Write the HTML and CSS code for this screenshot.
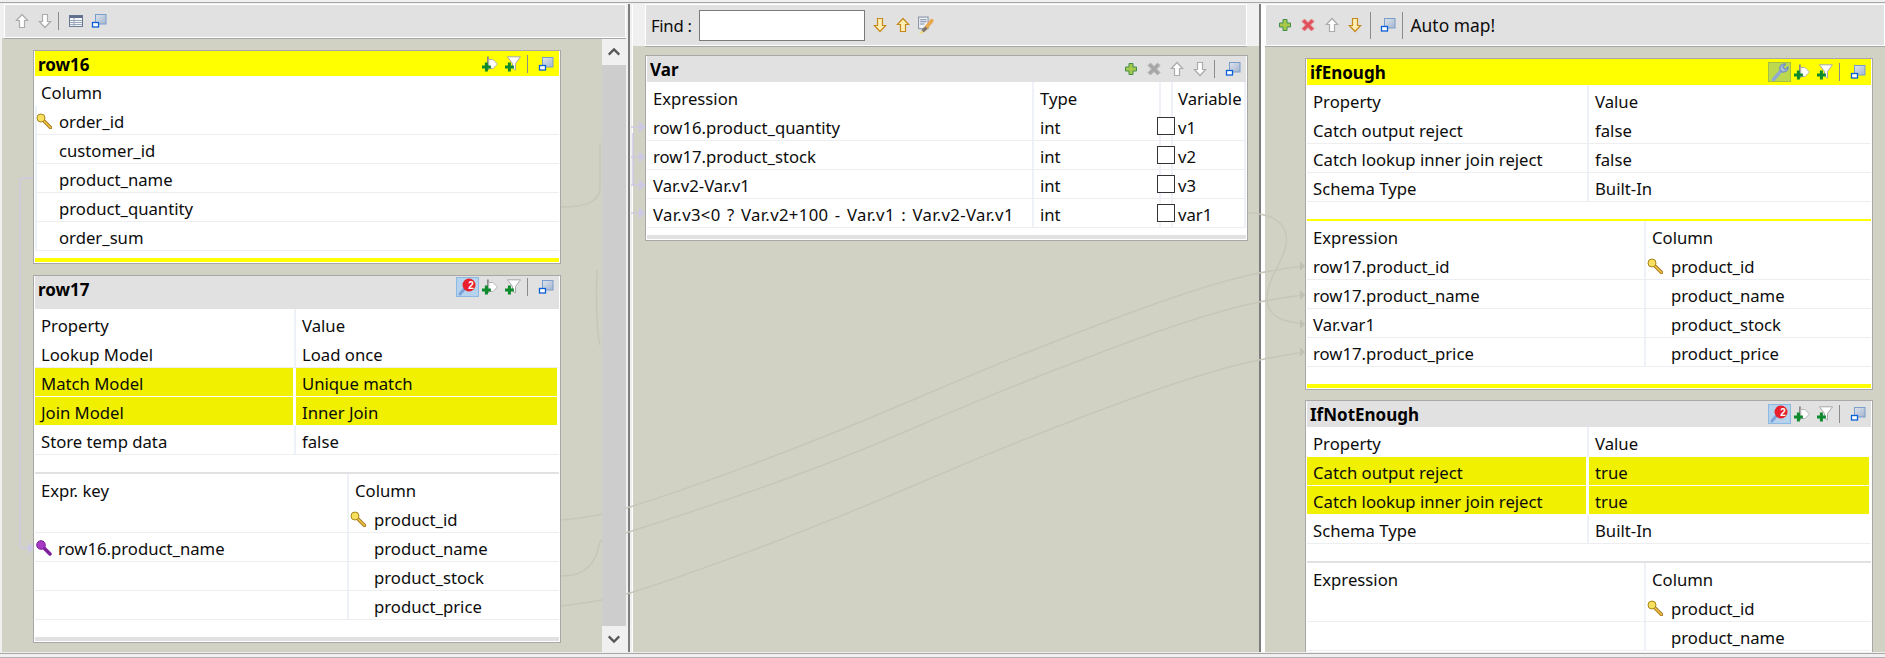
FILE: index.html
```html
<!DOCTYPE html>
<html lang="en">
<head>
<meta charset="utf-8">
<title>tMap</title>
<link rel="stylesheet" href="styles.css">
</head>
<body>
<svg class="defs" width="0" height="0" aria-hidden="true">
  <defs>
    <linearGradient id="winfill" x1="0" y1="0" x2="1" y2="1"><stop offset="0" stop-color="#dfe4ec"/><stop offset="1" stop-color="#a3b5cf"/></linearGradient>
  </defs>
  <symbol id="up" viewBox="0 0 16 16"><path d="M8 1.500 13.600 7.500H10.500V14.500H5.500V7.500H2.400Z"/></symbol>
  <symbol id="down" viewBox="0 0 16 16"><path d="M8 14.500 13.600 8.500H10.500V1.500H5.500V8.500H2.400Z"/></symbol>
  <symbol id="win" viewBox="0 0 16 16">
    <rect x="4.500" y="1.500" width="10.500" height="9.500" fill="url(#winfill)" stroke="#7b9dcb"/>
    <rect x="1.500" y="9.500" width="6" height="4.500" fill="#fff" stroke="#0b5fd6" stroke-width="1.300"/>
  </symbol>
  <symbol id="table" viewBox="0 0 16 16">
    <rect x="1.500" y="2.500" width="13" height="11" fill="#f4f6fa" stroke="#6c7b94"/>
    <rect x="1.500" y="2.500" width="13" height="2.500" fill="#5f6f8c"/>
    <path d="M2 7.500H14M2 9.500H14M2 11.500H14M6 5V13.500" stroke="#9aa6ba" fill="none"/>
  </symbol>
  <symbol id="plus" viewBox="0 0 16 16"><path d="M6 2.500H10V6H13.500V10H10V13.500H6V10H2.500V6H6Z" fill="#a8c84c" stroke="#3f8f4a"/></symbol>
  <symbol id="cross" viewBox="0 0 16 16"><path d="M4.500 2 8 5.500 11.500 2 14 4.500 10.500 8 14 11.500 11.500 14 8 10.500 4.500 14 2 11.500 5.500 8 2 4.500Z"/></symbol>
  <symbol id="addrow" viewBox="0 0 16 16">
    <path d="M5 .5H6.800V14H5Z" fill="#8a8a8a"/>
    <path d="M6.800 3.500H11L15.500 8 11 12.500H6.800Z" fill="#fff" stroke="#b4b4b4"/>
    <path d="M2.900 6.500H5.900V9.500H8.900V12.500H5.900V15.500H2.900V12.500H-.1V9.500H2.900Z" fill="#0c8a2c"/>
  </symbol>
  <symbol id="filter" viewBox="0 0 16 16">
    <path d="M2.500 .8H15.500L10.500 7.500V14L7.500 12V7.500Z" fill="#fff" stroke="#a8a8a8"/>
    <path d="M2.900 6.500H5.900V9.500H8.900V12.500H5.900V15.500H2.900V12.500H-.1V9.500H2.900Z" fill="#0c8a2c"/>
  </symbol>
  <symbol id="lens" viewBox="0 0 21 18">
    <path d="M3 16 9 9" stroke="#7da3d8" stroke-width="3" stroke-linecap="round"/>
    <circle cx="12" cy="7" r="6.500" fill="#e8202c"/>
  </symbol>
  <symbol id="wrench" viewBox="0 0 21 18">
    <path d="M4.500 16.500 12 8" stroke="#8fa9d3" stroke-width="3.500" stroke-linecap="round"/>
    <path d="M11 7C10 3 13 .5 16.500 1L14 4 16 6.500 19 4C19.500 8 15.500 10 12.500 8.500Z" fill="#a9bedd" stroke="#6e8fc2" stroke-width="1.200"/>
  </symbol>
  <symbol id="key" viewBox="0 0 16 16">
    <path d="M7.500 7.500 14.500 14.500" stroke="#a9791c" stroke-width="3.500" stroke-linecap="round"/>
    <path d="M7.500 7.500 14.500 14.500" stroke="#f0c848" stroke-width="1.500" stroke-linecap="round"/>
    <circle cx="5" cy="5" r="4" fill="#f6e05e" stroke="#a9851c"/>
  </symbol>
  <symbol id="keyp" viewBox="0 0 16 16">
    <path d="M7.500 7.500 14 14" stroke="#7e1f9c" stroke-width="3.500" stroke-linecap="round"/>
    <circle cx="5" cy="5" r="4.300" fill="#a638c4" stroke="#7e1f9c"/>
  </symbol>
  <symbol id="find" viewBox="0 0 18 18">
    <rect x="1.500" y="1" width="9" height="11" fill="#eef1f6" stroke="#8a94a4"/>
    <path d="M3 3.500H9M3 5.500H9M3 7.500H7" stroke="#7d8ba3" fill="none"/>
    <path d="M7 13 14 4.500" stroke="#e8a850" stroke-width="3.500" stroke-linecap="round"/>
    <path d="M5 14.500 9 11" stroke="#777" stroke-width="3"/>
    <path d="M1.500 17 5 13.500 6 16Z" fill="#f0dc70"/>
  </symbol>
</svg>

<div class="frame">
  <div class="topstrip"></div>
  <div class="main">

    <section class="pane pane-left">
      <div class="toolbar toolbar-short">
        <span class="tool gray"><svg><use href="#up"/></svg></span>
        <span class="tool gray"><svg><use href="#down"/></svg></span>
        <span class="sep"></span>
        <span class="tool"><svg><use href="#table"/></svg></span>
        <span class="tool"><svg><use href="#win"/></svg></span>
      </div>
      <div class="canvas canvas-left">
        <div class="stack">
          <article class="panel active">
            <header class="head">
              <h2>row16</h2>
              <div class="tools">
                <span class="tool"><svg><use href="#addrow"/></svg></span>
                <span class="tool"><svg><use href="#filter"/></svg></span>
                <span class="sep sep-head"></span>
                <span class="tool"><svg><use href="#win"/></svg></span>
              </div>
            </header>
            <div class="hrow"><span class="cell">Column</span></div>
            <div class="row edge"><span class="cell icon"><svg class="k"><use href="#key"/></svg>order_id</span></div>
            <div class="row edge"><span class="cell icon">customer_id</span></div>
            <div class="row edge"><span class="cell icon">product_name</span></div>
            <div class="row edge"><span class="cell icon">product_quantity</span></div>
            <div class="row edge"><span class="cell icon">order_sum</span></div>
            <div class="blank b7"></div>
            <div class="bar yellow"></div>
          </article>

          <article class="panel">
            <header class="head head-tall">
              <h2>row17</h2>
              <div class="tools">
                <span class="tool on-blue"><svg><use href="#lens"/></svg><b class="num">2</b></span>
                <span class="tool"><svg><use href="#addrow"/></svg></span>
                <span class="tool"><svg><use href="#filter"/></svg></span>
                <span class="sep sep-head"></span>
                <span class="tool"><svg><use href="#win"/></svg></span>
              </div>
            </header>
            <div class="cols c261">
              <div class="hrow"><span class="cell">Property</span><span class="cell">Value</span></div>
              <div class="row"><span class="cell">Lookup Model</span><span class="cell">Load once</span></div>
              <div class="row hl"><span class="cell">Match Model</span><span class="cell">Unique match</span></div>
              <div class="row hl"><span class="cell">Join Model</span><span class="cell">Inner Join</span></div>
              <div class="row"><span class="cell">Store temp data</span><span class="cell">false</span></div>
            </div>
            <div class="blank b17"></div>
            <div class="bar thin gray-bar"></div>
            <div class="cols c314">
              <div class="hrow"><span class="cell">Expr. key</span><span class="cell">Column</span></div>
              <div class="row"><span class="cell"></span><span class="cell icon"><svg class="k"><use href="#key"/></svg>product_id</span></div>
              <div class="row"><span class="cell icon wide-key"><svg class="k"><use href="#keyp"/></svg>row16.product_name</span><span class="cell icon">product_name</span></div>
              <div class="row"><span class="cell"></span><span class="cell icon">product_stock</span></div>
              <div class="row"><span class="cell"></span><span class="cell icon">product_price</span></div>
            </div>
            <div class="blank b17"></div>
            <div class="bar gray-bar"></div>
          </article>
        </div>
        <div class="scrollbar">
          <span class="sb-btn"><svg viewBox="0 0 16 10"><path d="M2 8 8 2 14 8"/></svg></span>
          <span class="sb-thumb"></span>
          <span class="sb-btn"><svg viewBox="0 0 16 10"><path d="M2 2 8 8 14 2"/></svg></span>
        </div>
      </div>
    </section>

    <div class="sash sash-a"></div>

    <section class="pane pane-mid">
      <div class="toolbar toolbar-mid">
        <label class="find">Find :</label>
        <input class="find-input" type="text">
        <span class="tool orange"><svg><use href="#down"/></svg></span>
        <span class="tool orange"><svg><use href="#up"/></svg></span>
        <span class="tool find-ico"><svg><use href="#find"/></svg></span>
      </div>
      <div class="canvas canvas-mid">
        <article class="panel panel-var">
          <header class="head head-26">
            <h2>Var</h2>
            <div class="tools">
              <span class="tool"><svg><use href="#plus"/></svg></span>
              <span class="tool muted"><svg><use href="#cross"/></svg></span>
              <span class="tool gray"><svg><use href="#up"/></svg></span>
              <span class="tool gray"><svg><use href="#down"/></svg></span>
              <span class="sep sep-head"></span>
              <span class="tool"><svg><use href="#win"/></svg></span>
            </div>
          </header>
          <div class="cols cvar">
            <div class="hrow"><span class="cell">Expression</span><span class="cell">Type</span><span class="cell"></span><span class="cell">Variable</span></div>
            <div class="row"><span class="cell">row16.product_quantity</span><span class="cell">int</span><span class="cell check"><i class="box"></i></span><span class="cell">v1</span></div>
            <div class="row"><span class="cell">row17.product_stock</span><span class="cell">int</span><span class="cell check"><i class="box"></i></span><span class="cell">v2</span></div>
            <div class="row"><span class="cell">Var.v2-Var.v1</span><span class="cell">int</span><span class="cell check"><i class="box"></i></span><span class="cell">v3</span></div>
            <div class="row"><span class="cell wide">Var.v3&lt;0 ? Var.v2+100 - Var.v1 : Var.v2-Var.v1</span><span class="cell">int</span><span class="cell check"><i class="box"></i></span><span class="cell">var1</span></div>
          </div>
          <div class="blank b7"></div>
          <div class="bar gray-bar"></div>
        </article>
      </div>
    </section>

    <div class="sash sash-b"></div>

    <section class="pane pane-right">
      <div class="toolbar toolbar-right">
        <span class="tool"><svg><use href="#plus"/></svg></span>
        <span class="tool red"><svg><use href="#cross"/></svg></span>
        <span class="tool gray"><svg><use href="#up"/></svg></span>
        <span class="tool orange"><svg><use href="#down"/></svg></span>
        <span class="sep sep-tb"></span>
        <span class="tool"><svg><use href="#win"/></svg></span>
        <span class="sep sep-tb2"></span>
        <span class="automap">Auto map!</span>
      </div>
      <div class="canvas canvas-right">
        <article class="panel panel-out active">
          <header class="head head-26">
            <h2>ifEnough</h2>
            <div class="tools">
              <span class="tool on-green"><svg><use href="#wrench"/></svg></span>
              <span class="tool"><svg><use href="#addrow"/></svg></span>
              <span class="tool"><svg><use href="#filter"/></svg></span>
              <span class="sep sep-head"></span>
              <span class="tool"><svg><use href="#win"/></svg></span>
            </div>
          </header>
          <div class="cols c282">
            <div class="hrow"><span class="cell">Property</span><span class="cell">Value</span></div>
            <div class="row"><span class="cell">Catch output reject</span><span class="cell">false</span></div>
            <div class="row"><span class="cell">Catch lookup inner join reject</span><span class="cell">false</span></div>
            <div class="row"><span class="cell">Schema Type</span><span class="cell">Built-In</span></div>
          </div>
          <div class="blank b17"></div>
          <div class="bar thin yellow"></div>
          <div class="cols c339">
            <div class="hrow"><span class="cell">Expression</span><span class="cell">Column</span></div>
            <div class="row"><span class="cell">row17.product_id</span><span class="cell icon"><svg class="k"><use href="#key"/></svg>product_id</span></div>
            <div class="row"><span class="cell">row17.product_name</span><span class="cell icon">product_name</span></div>
            <div class="row"><span class="cell">Var.var1</span><span class="cell icon">product_stock</span></div>
            <div class="row"><span class="cell">row17.product_price</span><span class="cell icon">product_price</span></div>
          </div>
          <div class="blank b17"></div>
          <div class="bar yellow"></div>
        </article>

        <article class="panel panel-out">
          <header class="head head-26">
            <h2>IfNotEnough</h2>
            <div class="tools">
              <span class="tool on-blue"><svg><use href="#lens"/></svg><b class="num">2</b></span>
              <span class="tool"><svg><use href="#addrow"/></svg></span>
              <span class="tool"><svg><use href="#filter"/></svg></span>
              <span class="sep sep-head"></span>
              <span class="tool"><svg><use href="#win"/></svg></span>
            </div>
          </header>
          <div class="cols c282">
            <div class="hrow"><span class="cell">Property</span><span class="cell">Value</span></div>
            <div class="row hl"><span class="cell">Catch output reject</span><span class="cell">true</span></div>
            <div class="row hl"><span class="cell">Catch lookup inner join reject</span><span class="cell">true</span></div>
            <div class="row"><span class="cell">Schema Type</span><span class="cell">Built-In</span></div>
          </div>
          <div class="blank b17"></div>
          <div class="bar thin gray-bar"></div>
          <div class="cols c339">
            <div class="hrow"><span class="cell">Expression</span><span class="cell">Column</span></div>
            <div class="row"><span class="cell"></span><span class="cell icon"><svg class="k"><use href="#key"/></svg>product_id</span></div>
            <div class="row"><span class="cell"></span><span class="cell icon">product_name</span></div>
          </div>
        </article>
      </div>
    </section>
  </div>
  <div class="botstrip"></div>

  <svg class="links" width="1885" height="658" viewBox="0 0 1885 658" aria-hidden="true">
    <g class="link">
      <path d="M560 520C600 517 620 510 630 507C700 485 800 447 865 420C920 397 975 373 1028 352C1120 316 1200 285 1259 273Q1285 268 1305 266"/>
      <path d="M600 541C700 510 800 475 865 448.500C920 425.500 975 401.500 1028 380.500C1120 344.500 1200 314 1259 302Q1285 297 1305 295"/>
      <path d="M560 606C600 602 620 596 630 593C700 571 800 533 865 506C920 483 975 459 1028 438C1120 402 1200 372 1259 360Q1285 355 1305 352"/>
      <path d="M561 576C585 576 596 565 600 541"/>
      <path d="M561 207C585 207 597 203 600 190V143"/>
      <path d="M600 345C596 330 596 290 597 270"/>
      <path d="M1247 213C1270 213 1290 222 1286 245C1282 265 1266 280 1267 300C1268 318 1285 322 1305 324"/>
    </g>
    <g class="link-head">
      <path d="M1300 261 1305 266 1300 271Z"/>
      <path d="M1300 290 1305 295 1300 300Z"/>
      <path d="M1300 319 1305 324 1300 329Z"/>
      <path d="M1300 347 1305 352 1300 357Z"/>
    </g>
    <g class="purple">
      <path d="M33 178H24Q20 178 20 182V544Q20 548 24 548H33"/>
      <path d="M631 127H645M631 157H645M631 185H645M631 213H645M633 133V185"/>
    </g>
    <g class="purple-head">
      <path d="M28 542 34 548 28 554Z"/>
      <path d="M639 121 645 127 639 133Z"/>
      <path d="M639 151 645 157 639 163Z"/>
      <path d="M639 179 645 185 639 191Z"/>
      <path d="M639 207 645 213 639 219Z"/>
    </g>
  </svg>
</div>
</body>
</html>
```
FILE: styles.css
```css
* { box-sizing: border-box; }
html, body { margin: 0; padding: 0; }
body {
  width: 1885px;
  height: 658px;
  overflow: hidden;
  background: #f0f0f0;
  font-family: "Noto Sans", "Open Sans", sans-serif;
  font-size: 16.7px;
  color: #0c0c0c;
}
.defs { position: absolute; }
.frame { position: relative; width: 1885px; height: 658px; }
.topstrip { height: 3px; margin-bottom: 1px; border-bottom: 1px solid #a6a6a6; }
.main { display: flex; height: 648px; }
.botstrip { margin-top: 1px; height: 5px; border-top: 1px solid #a6a6a6; border-bottom: 1px solid #b4b4b4; }

.pane { display: flex; flex-direction: column; min-width: 0; }
.pane-left { width: 624px; margin-left: 2px; }
.pane-mid { width: 626px; }
.pane-right { width: 620px; }

.sash { flex: none; }
.sash-a {
  width: 7px;
  border-right: 1px solid #fff;
  background: linear-gradient(90deg, #f0f0f0 2px, #7d7d7d 2px, #7d7d7d 4px, #f0f0f0 4px);
}
.sash-b {
  width: 6px;
  background: linear-gradient(90deg, #7d7d7d 2px, #fff 2px);
}

.toolbar {
  position: relative;
  z-index: 2;
  flex: none;
  display: flex;
  align-items: center;
  background: #e1e1e1;
  border: 1px solid #fff;
  box-shadow: 0 1px 0 #a6a6a6;
}
.toolbar-short { height: 34px; margin-left: 2px; padding-left: 5px; }
.toolbar-mid { height: 42px; margin: 0 12px; padding-left: 5px; }
.toolbar-right { height: 42px; padding-left: 7px; }
.toolbar-right .tool { width: 23.5px; }

.find { margin-right: 7px; letter-spacing: -.3px; }
.find-input { width: 166px; height: 31px; margin-right: 4px; border: 1px solid #7a7a7a; background: #fff; padding: 0; }
.automap { margin-left: 8px; font-size: 17.4px; }

.tool {
  position: relative;
  flex: none;
  width: 23px;
  height: 20px;
  display: flex;
  align-items: center;
  justify-content: center;
}
.tool svg { width: 16px; height: 16px; overflow: visible; }
.tool.find-ico svg { width: 19px; height: 19px; }
.gray { fill: #fff; stroke: #ababab; }
.gray svg, .orange svg { stroke-width: 1.2; }
.orange { fill: #ffeeb4; stroke: #c48a1e; }
.red { fill: #e0505a; stroke: #e88a90; }
.muted { fill: #a6a6a6; stroke: #b6b6b6; }
.on-blue { background: #b6d3ee; border: 1px solid #8db8e2; }
.on-green { background: #bcd84e; border: 1px solid #a3bf4a; }
.on-blue svg, .on-green svg { width: 21px; height: 18px; }
.num {
  position: absolute;
  left: 8px;
  top: 1px;
  width: 13px;
  font: bold 10px/13px "Liberation Sans", sans-serif;
  color: #fff;
  text-align: center;
}

.sep { flex: none; width: 1px; background: #8c8c8c; }
.sep-head { height: 18px; margin: 0 6.5px 0 2px; }
.sep-tb { height: 27px; margin: 0 5px 0 3px; }
.sep-tb2 { height: 27px; margin: 0 0 0 2px; }
.toolbar-short .sep { height: 18px; margin: 0 5px 0 2px; }

.canvas {
  position: relative;
  flex: 1;
  min-height: 0;
  overflow: hidden;
  background: #d1d2c3;
}
.canvas-left { display: flex; justify-content: space-between; }
.stack { padding: 12px 0 0 31px; }
.canvas-mid { padding: 9px 0 0 12px; }
.canvas-right { padding: 12px 0 0 40px; }

.scrollbar { position: relative; z-index: 2; flex: none; width: 24px; display: flex; flex-direction: column; margin-top: 1px; }
.sb-btn { flex: none; height: 26px; background: #f0f0f0; display: flex; align-items: center; justify-content: center; }
.sb-btn svg { width: 14px; height: 10px; fill: none; stroke: #555; stroke-width: 2.5; }
.sb-thumb { flex: 1; background: #cdcdcd; }

.panel {
  position: relative;
  z-index: 2;
  width: 528px;
  margin-bottom: 11px;
  padding: 0 1px 1px;
  background: #fff;
  border: 1px solid #a8a8a8;
}
.panel-var { width: 603px; }
.panel-out { width: 568px; margin-bottom: 10px; }

.head {
  height: 25px;
  display: flex;
  align-items: center;
  justify-content: space-between;
  padding: 0 2px 0 3px;
  background: #e1e1e1;
}
.head-26 { height: 26px; }
.head-tall { height: 33px; align-items: flex-start; padding-top: 2px; }
.head-tall .tools { margin-top: -1px; }
.active > .head { background: #ffff00; }
.head h2 { margin: 2px 0 0; font-size: 17px; line-height: 24px; font-weight: 700; color: #000; }
.head-tall h2 { margin-top: 0; }
.tools { display: flex; align-items: center; }

.hrow, .row { display: flex; }
.hrow { height: 30px; align-items: stretch; }
.row { height: 29px; border-bottom: 1px solid #eceef2; }
.edge { border-left: 2px solid #edf1f8; }
.cell {
  position: relative;
  flex: 1 1 0;
  min-width: 0;
  display: flex;
  align-items: center;
  padding: 2px 0 0 6px;
  white-space: nowrap;
}
.cell.icon { padding-left: 25px; }
.edge .cell.icon { padding-left: 22px; }
.cell.wide-key { padding-left: 23px; }
.wide { letter-spacing: .35px; word-spacing: 1.7px; }
.k { position: absolute; left: 1px; top: 7px; width: 16px; height: 16px; }
.edge .k { left: -1px; }

.c261 .cell:first-child { flex: none; width: 261px; border-right: 2px solid #eef1f7; }
.c314 .cell:first-child { flex: none; width: 314px; border-right: 2px solid #eef1f7; }
.c282 .cell:first-child { flex: none; width: 282px; border-right: 2px solid #eef1f7; }
.c339 .cell:first-child { flex: none; width: 339px; border-right: 2px solid #eef1f7; }
.cvar .cell:nth-child(1) { flex: none; width: 387px; border-right: 2px solid #eef1f7; }
.cvar .cell:nth-child(2) { flex: none; width: 127px; border-right: 2px solid #eef1f7; }
.cvar .cell:nth-child(3) { flex: none; width: 12px; padding: 0; border-right: 2px solid #eef1f7; overflow: visible; }
.cvar .cell:nth-child(4) { padding-left: 5px; border-right: 2px solid #eef1f7; }

.hl { border-bottom-color: #fff; }
.hl .cell { background: #f0f000; }
.c261 .hl .cell:first-child, .c282 .hl .cell:first-child { border-right: 3px solid #fff; }
.c261 .hl .cell:last-child, .c282 .hl .cell:last-child { margin-right: 2px; }

.box { position: absolute; left: -4px; top: 5px; width: 18px; height: 18px; border: 1px solid #333; background: #fff; }

.blank { flex: none; }
.b7 { height: 7px; }
.b17 { height: 17px; }
.bar { height: 4px; }
.bar.thin { height: 2px; }
.yellow { background: #ffff00; }
.gray-bar { background: #e1e1e1; }

.links { position: absolute; left: 0; top: 0; z-index: 1; pointer-events: none; }
.link path { fill: none; stroke: #c6c7b8; stroke-width: 1.5; }
.link-head path { fill: #c0c1b2; }
.purple path { fill: none; stroke: #cdc9e4; stroke-width: 1.5; }
.purple-head path { fill: #cdc9e4; }
```
